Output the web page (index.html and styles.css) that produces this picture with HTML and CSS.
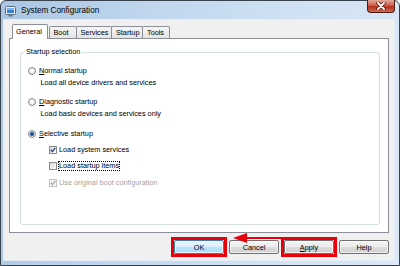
FILE: index.html
```html
<!DOCTYPE html>
<html lang="en">
<head>
    <meta charset="UTF-8">
    <title>System Configuration</title>
    <link rel="stylesheet" href="styles.css">
</head>
<body>
    <div class="window">
        <div class="titlebar">
            <svg class="app-icon" width="11" height="11" viewBox="0 0 11 11">
                <rect x="0.5" y="0.5" width="10" height="8" rx="1" fill="#e9eef3" stroke="#5d6c7b"/>
                <rect x="2" y="2" width="7" height="5" fill="#3b7fd6"/>
                <rect x="2" y="2" width="7" height="2" fill="#7fb3ee"/>
                <rect x="3.5" y="9" width="4" height="1.5" fill="#6b7886"/>
            </svg>
            <span class="title">System Configuration</span>
            <div class="close">
                <svg width="10" height="8" viewBox="0 0 10 8">
                    <path d="M2 1 L8 7 M8 1 L2 7" stroke="#5a1a12" stroke-width="3.4" stroke-linecap="round"/>
                    <path d="M2 1 L8 7 M8 1 L2 7" stroke="#fff" stroke-width="1.8" stroke-linecap="round"/>
                </svg>
            </div>
        </div>

        <div class="client">
            <div class="tabs">
                <div class="tab active">General</div>
                <div class="tab">Boot</div>
                <div class="tab">Services</div>
                <div class="tab">Startup</div>
                <div class="tab">Tools</div>
            </div>

            <div class="panel">
                <div class="group">
                    <div class="group-title">Startup selection</div>

                    <div class="option">
                        <div class="radio-row"><span class="radio"></span><span><u>N</u>ormal startup</span></div>
                        <div class="desc">Load all device drivers and services</div>
                    </div>
                    <div class="option">
                        <div class="radio-row"><span class="radio"></span><span><u>D</u>iagnostic startup</span></div>
                        <div class="desc">Load basic devices and services only</div>
                    </div>
                    <div class="option">
                        <div class="radio-row"><span class="radio checked"></span><span><u>S</u>elective startup</span></div>
                    </div>

                    <div class="checks">
                        <div class="check-row">
                            <span class="check">
                                <svg width="6" height="6" viewBox="0 0 6 6"><path d="M0.8 2.8 L2.4 4.6 L5.3 0.8" fill="none" stroke="#1f3f88" stroke-width="1.3"/></svg>
                            </span>
                            <span>Load system services</span>
                        </div>
                        <div class="check-row">
                            <span class="check"></span>
                            <span class="focus">Load startup items</span>
                        </div>
                        <div class="check-row disabled">
                            <span class="check">
                                <svg width="6" height="6" viewBox="0 0 6 6"><path d="M0.8 2.8 L2.4 4.6 L5.3 0.8" fill="none" stroke="#a5a5a5" stroke-width="1.3"/></svg>
                            </span>
                            <span>Use original boot configuration</span>
                        </div>
                    </div>
                </div>
            </div>

            <div class="buttons">
                <span class="mark"><button class="btn default">OK</button></span>
                <button class="btn">Cancel</button>
                <span class="mark"><button class="btn"><u>A</u>pply</button></span>
                <button class="btn">Help</button>
            </div>

            <!-- annotation arrow: Apply -> OK -->
            <svg class="arrow" width="56" height="16" viewBox="0 0 56 16">
                <path d="M16 8 H54" stroke="#e8000b" stroke-width="2"/>
                <polygon points="3,8 17,3 17,13" fill="#e8000b"/>
            </svg>
        </div>
    </div>
</body>
</html>
```

FILE: styles.css
```css
* {
    margin: 0;
    padding: 0;
    box-sizing: border-box;
}

body {
    width: 400px;
    height: 266px;
    overflow: hidden;
    font-family: 'Liberation Sans', Arial, sans-serif;
    font-size: 7.3px;
    color: #000;
    background: #fff;
}

.window {
    width: 400px;
    height: 266px;
    border: 1px solid #38424d;
    border-radius: 6px 6px 0 0;
    background: linear-gradient(100deg, #aac5e3 0%, #c0d7ee 35%, #cfe1f3 65%, #dbe8f5 100%);
    padding: 0 5px 5px 3px;
    display: flex;
    flex-direction: column;
}

.titlebar {
    height: 19px;
    display: flex;
    align-items: center;
}

.app-icon {
    margin-left: 1px;
    margin-top: 1px;
}

.title {
    margin-left: 5px;
    font-size: 8.2px;
    color: #000;
}

.close {
    margin-left: auto;
    margin-right: -1px;
    margin-top: -1px;
    align-self: flex-start;
    width: 28px;
    height: 13px;
    border: 1px solid #4e1c16;
    border-top: none;
    border-radius: 0 0 4px 4px;
    background: linear-gradient(#e4a89b, #cf5d4a 45%, #b3311d 55%, #cf6a52);
    display: flex;
    align-items: center;
    justify-content: center;
}

.client {
    flex: 1;
    position: relative;
    background: #f0f0f0;
    box-shadow: 0 0 0 1px #e4eef8;
    padding: 0 5px;
    display: flex;
    flex-direction: column;
}

/* tabs */
.tabs {
    height: 18px;
    display: flex;
    align-items: flex-end;
    padding-left: 3px;
}

.tab {
    height: 12px;
    min-width: 28px;
    line-height: 11px;
    padding: 0 3px 0 3.5px;
    margin-left: -1px;
    border: 1px solid #8c8f97;
    border-bottom: none;
    border-radius: 2px 2px 0 0;
    background: linear-gradient(#f5f5f5, #e4e4e4);
}

.tab.active {
    height: 15px;
    line-height: 14px;
    margin: 0 2px -1px 0;
    padding: 0 5px 0 3px;
    background: #fff;
    position: relative;
    z-index: 1;
}

.panel {
    flex: 1;
    background: #fff;
    border: 1px solid #8c8f97;
    padding: 13px 8px 7px 10px;
    display: flex;
    flex-direction: column;
}

/* group box */
.group {
    flex: 1;
    border: 1px solid #d5dfe5;
    border-radius: 3px;
    padding: 0 7px;
}

.group-title {
    width: max-content;
    margin: -6px 0 0 -4px;
    padding: 0 2px;
    line-height: 10px;
    background: #fff;
}

.option {
    margin-top: 7.5px;
}

.option:first-of-type {
    margin-top: 4px;
}

.radio-row,
.check-row {
    height: 12px;
    line-height: 12px;
    display: flex;
    align-items: center;
}

.radio {
    width: 8px;
    height: 8px;
    margin-right: 3px;
    border: 1px solid #8b8b8b;
    border-radius: 50%;
    background: radial-gradient(circle, #ffffff 20%, #d6d6d6 100%);
}

.radio.checked {
    background: radial-gradient(circle, #15376e 0, #2d5b9c 1.5px, #8fb0d8 2.2px, #f2f2f2 2.7px, #d6d6d6 100%);
}

.desc {
    height: 12px;
    line-height: 12px;
    padding-left: 12.5px;
}

.checks {
    padding-left: 21px;
    margin-top: 4px;
}

.check-row + .check-row {
    margin-top: 4px;
}

.check-row.disabled {
    margin-top: 5px;
    color: #a3a3a3;
}

.check {
    width: 8px;
    height: 8px;
    margin-right: 2px;
    border: 1px solid #8b8b8b;
    background: linear-gradient(135deg, #dcdcdc, #fbfbfb);
    display: flex;
}

.disabled .check {
    border-color: #c2c2c2;
    background: #f4f4f4;
}

.focus {
    line-height: 10px;
    padding: 0 1px;
    margin-left: -1px;
    outline: 1px dotted #000;
    outline-offset: -1px;
}

/* dialog buttons */
.buttons {
    display: flex;
    justify-content: flex-end;
    gap: 5px;
    padding: 7px 0 6px;
}

.btn {
    display: block;
    width: 50px;
    height: 14px;
    border: 1px solid #707070;
    border-radius: 2px;
    background: linear-gradient(#f3f3f3 0, #ebebeb 50%, #dddddd 50%, #cfcfcf 100%);
    box-shadow: inset 0 0 0 1px rgba(255, 255, 255, 0.7);
    font: inherit;
    color: #000;
}

.btn.default {
    border-color: #3c7fb1;
    background: linear-gradient(#eaf6fd 0, #d9f0fc 50%, #bee6fd 50%, #a7d9f5 100%);
}

/* red annotation box round a button */
.mark {
    display: flex;
    margin: -3px;
    border: 3px solid #e8000b;
}

.arrow {
    position: absolute;
    left: 226px;
    top: 210px;
}
```
